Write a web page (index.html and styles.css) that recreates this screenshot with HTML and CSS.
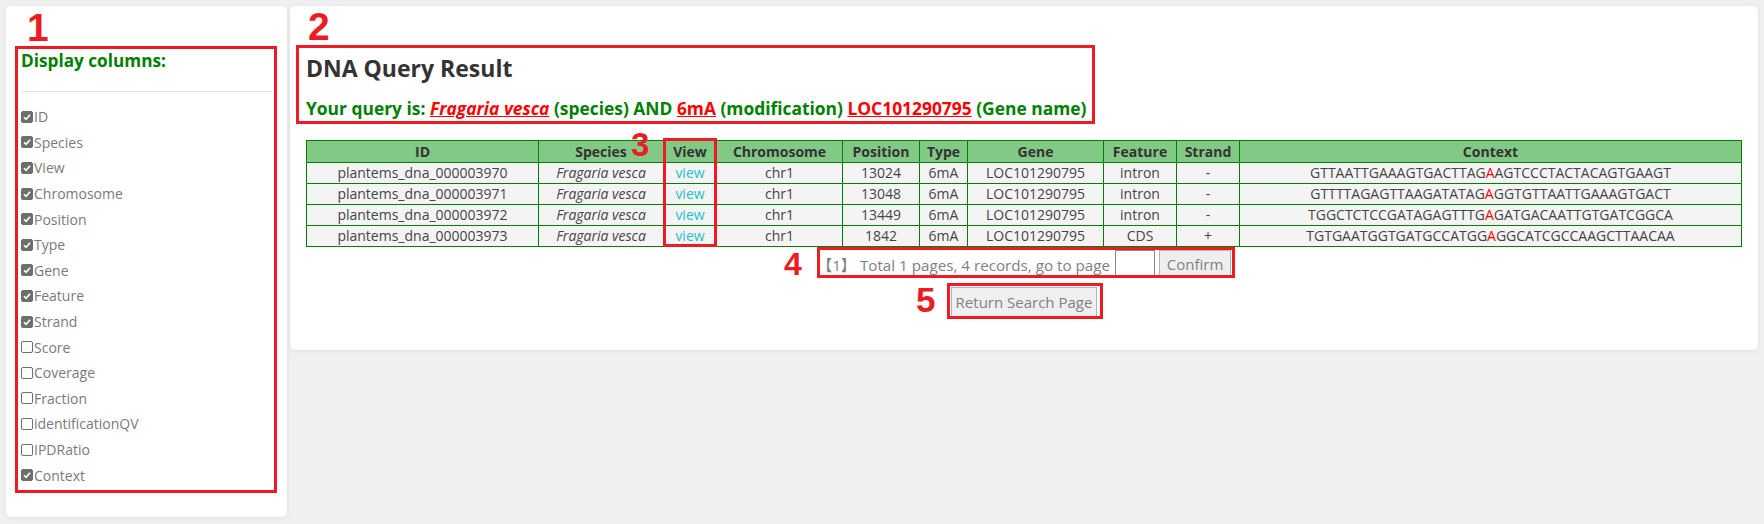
FILE: index.html
```html
<!DOCTYPE html>
<html lang="en">
<head>
  <meta charset="UTF-8">
  <title>DNA Query Result</title>
  <link rel="stylesheet" href="styles.css">
</head>
<body>
  <div class="sidebar card">
    <h3 class="side-title">Display columns:</h3>
    <hr>
    <div class="columns">
      <label class="col-row"><span class="cb on"><svg viewBox="0 0 12 12"><path d="M2.4 6.3 L4.9 8.7 L9.7 3.3"/></svg></span>ID</label>
      <label class="col-row"><span class="cb on"><svg viewBox="0 0 12 12"><path d="M2.4 6.3 L4.9 8.7 L9.7 3.3"/></svg></span>Species</label>
      <label class="col-row"><span class="cb on"><svg viewBox="0 0 12 12"><path d="M2.4 6.3 L4.9 8.7 L9.7 3.3"/></svg></span>View</label>
      <label class="col-row"><span class="cb on"><svg viewBox="0 0 12 12"><path d="M2.4 6.3 L4.9 8.7 L9.7 3.3"/></svg></span>Chromosome</label>
      <label class="col-row"><span class="cb on"><svg viewBox="0 0 12 12"><path d="M2.4 6.3 L4.9 8.7 L9.7 3.3"/></svg></span>Position</label>
      <label class="col-row"><span class="cb on"><svg viewBox="0 0 12 12"><path d="M2.4 6.3 L4.9 8.7 L9.7 3.3"/></svg></span>Type</label>
      <label class="col-row"><span class="cb on"><svg viewBox="0 0 12 12"><path d="M2.4 6.3 L4.9 8.7 L9.7 3.3"/></svg></span>Gene</label>
      <label class="col-row"><span class="cb on"><svg viewBox="0 0 12 12"><path d="M2.4 6.3 L4.9 8.7 L9.7 3.3"/></svg></span>Feature</label>
      <label class="col-row"><span class="cb on"><svg viewBox="0 0 12 12"><path d="M2.4 6.3 L4.9 8.7 L9.7 3.3"/></svg></span>Strand</label>
      <label class="col-row"><span class="cb"></span>Score</label>
      <label class="col-row"><span class="cb"></span>Coverage</label>
      <label class="col-row"><span class="cb"></span>Fraction</label>
      <label class="col-row"><span class="cb"></span>identificationQV</label>
      <label class="col-row"><span class="cb"></span>IPDRatio</label>
      <label class="col-row"><span class="cb on"><svg viewBox="0 0 12 12"><path d="M2.4 6.3 L4.9 8.7 L9.7 3.3"/></svg></span>Context</label>
    </div>

    <!-- annotation -->
    <div class="mark box1"></div>
    <span class="num num1">1</span>
  </div>

  <div class="main card">
    <h2 class="title">DNA Query Result</h2>
    <p class="query">Your query is: <a href="#" class="q-species">Fragaria vesca</a> (species) AND <a href="#">6mA</a> (modification) <a href="#">LOC101290795</a> (Gene name)</p>

    <table class="result">
      <colgroup>
        <col style="width:232px">
        <col style="width:125px">
        <col style="width:53px">
        <col style="width:126px">
        <col style="width:77px">
        <col style="width:48px">
        <col style="width:136px">
        <col style="width:73px">
        <col style="width:63px">
        <col>
      </colgroup>
      <thead>
        <tr>
          <th>ID</th><th>Species</th><th>View</th><th>Chromosome</th><th>Position</th><th>Type</th><th>Gene</th><th>Feature</th><th>Strand</th><th>Context</th>
        </tr>
      </thead>
      <tbody>
        <tr>
          <td>plantems_dna_000003970</td><td class="sp">Fragaria vesca</td><td><a href="#" class="view">view</a></td><td>chr1</td><td>13024</td><td>6mA</td><td>LOC101290795</td><td>intron</td><td>-</td>
          <td>GTTAATTGAAAGTGACTTAG<span class="site">A</span>AGTCCCTACTACAGTGAAGT</td>
        </tr>
        <tr>
          <td>plantems_dna_000003971</td><td class="sp">Fragaria vesca</td><td><a href="#" class="view">view</a></td><td>chr1</td><td>13048</td><td>6mA</td><td>LOC101290795</td><td>intron</td><td>-</td>
          <td>GTTTTAGAGTTAAGATATAG<span class="site">A</span>GGTGTTAATTGAAAGTGACT</td>
        </tr>
        <tr>
          <td>plantems_dna_000003972</td><td class="sp">Fragaria vesca</td><td><a href="#" class="view">view</a></td><td>chr1</td><td>13449</td><td>6mA</td><td>LOC101290795</td><td>intron</td><td>-</td>
          <td>TGGCTCTCCGATAGAGTTTG<span class="site">A</span>GATGACAATTGTGATCGGCA</td>
        </tr>
        <tr>
          <td>plantems_dna_000003973</td><td class="sp">Fragaria vesca</td><td><a href="#" class="view">view</a></td><td>chr1</td><td>1842</td><td>6mA</td><td>LOC101290795</td><td>CDS</td><td>+</td>
          <td>TGTGAATGGTGATGCCATGG<span class="site">A</span>GGCATCGCCAAGCTTAACAA</td>
        </tr>
      </tbody>
    </table>

    <div class="pager">
      <span class="pager-text">【1】 Total 1 pages, 4 records, go to page</span>
      <input type="text" class="page-input">
      <button class="btn confirm">Confirm</button>
    </div>
    <div class="back">
      <button class="btn back-btn">Return Search Page</button>
    </div>

    <!-- annotations -->
    <div class="mark box2"></div>
    <span class="num num2">2</span>
    <div class="mark box3"></div>
    <span class="num num3">3</span>
    <div class="mark box4"></div>
    <span class="num num4">4</span>
    <div class="mark box5"></div>
    <span class="num num5">5</span>
  </div>
</body>
</html>
```

FILE: styles.css
```css
body {
  margin: 0;
  padding: 6px;
  display: flex;
  align-items: flex-start;
  gap: 3px;
  background-color: #f0f0f0;
  font-family: 'Open Sans', 'Noto Sans', 'Noto Sans CJK SC', sans-serif;
  color: #333;
}

.card {
  position: relative;
  background-color: #fff;
  border-radius: 5px;
  box-shadow: 0 1px 5px rgba(0,0,0,0.07);
  box-sizing: border-box;
}

/* sidebar */
.sidebar {
  width: 281px;
  height: 511px;
  padding: 44px 14px 0 15px;
}

.side-title {
  margin: 0;
  font-size: 17.2px;
  line-height: 22px;
  font-weight: 700;
  color: #008000;
}

.sidebar hr {
  margin: 19px 0 12px;
  border: none;
  border-top: 1px solid #e2e2e2;
}

.col-row {
  display: flex;
  align-items: center;
  height: 25.6px;
  font-size: 14px;
  color: #7a7a7a;
}

.cb {
  width: 12px;
  height: 12px;
  box-sizing: border-box;
  border: 1px solid #6e6e6e;
  border-radius: 2px;
  margin-right: 1px;
  background-color: #fff;
  display: flex;
}

.cb.on {
  background-color: #6e6e6e;
}

.cb svg {
  width: 10px;
  height: 10px;
  fill: none;
  stroke: #fff;
  stroke-width: 2;
}

/* main */
.main {
  flex: 1;
  height: 344px;
  padding: 47px 16px 0;
}

.title {
  margin: 0;
  font-size: 23px;
  line-height: 30px;
  font-weight: 700;
  color: #333;
}

.query {
  margin: 14px 0 21px;
  font-size: 17.4px;
  line-height: 22px;
  font-weight: 700;
  color: #008000;
}

.query a {
  color: #ff0000;
}

.query .q-species {
  font-style: italic;
}

.result {
  width: 100%;
  table-layout: fixed;
  border-collapse: collapse;
  font-size: 14px;
  text-align: center;
}

.result th {
  background-color: #82c986;
  border: 1px solid #008000;
  line-height: 21px;
  padding: 0;
  font-weight: 700;
  color: #333;
}

.result td {
  background-color: #f4f4f4;
  border: 1px solid #008000;
  line-height: 20px;
  padding: 0;
  color: #444;
  white-space: nowrap;
}

.result td.sp {
  font-style: italic;
}

.view {
  color: #26bfc7;
  text-decoration: none;
}

.site {
  color: #ff0000;
}

.pager {
  display: flex;
  justify-content: center;
  align-items: center;
  margin-top: 3px;
  height: 27px;
  font-size: 15.2px;
  color: #808080;
}

.pager-text {
  margin-right: 5px;
}

.page-input {
  width: 40px;
  height: 27px;
  box-sizing: border-box;
  border: 1px solid #8a8a8a;
  padding: 0;
  margin: 0 4px 0 0;
}

.btn {
  font-family: inherit;
  background-color: #efefef;
  border: 1px solid #b5b5b5;
  color: #808080;
  cursor: pointer;
}

.confirm {
  height: 27px;
  width: 72px;
  font-size: 15px;
  padding: 0;
}

.back {
  display: flex;
  justify-content: center;
  margin-top: 10px;
}

.back-btn {
  width: 146px;
  height: 30px;
  font-size: 15px;
  padding: 0;
}

/* red annotation marks */
.mark {
  position: absolute;
  border: 3px solid #ed1c24;
  box-sizing: border-box;
  pointer-events: none;
}

.num {
  position: absolute;
  font-family: 'Liberation Sans', Arial, sans-serif;
  font-weight: 700;
  line-height: 1;
  color: #ed1c24;
}

.box1 { left: 9px; top: 40px; width: 262px; height: 447px; }
.num1 { left: 21px; top: 2px; font-size: 39px; }

.box2 { left: 6px; top: 39px; width: 799px; height: 79px; }
.num2 { left: 18px; top: 1px; font-size: 39px; }

.box3 { left: 373px; top: 132px; width: 54px; height: 109px; }
.num3 { left: 341px; top: 122px; font-size: 33px; }

.box4 { left: 527px; top: 241px; width: 418px; height: 31px; }
.num4 { left: 494px; top: 242px; font-size: 32px; }

.box5 { left: 657px; top: 277px; width: 156px; height: 36px; }
.num5 { left: 626px; top: 276px; font-size: 35px; }
```
